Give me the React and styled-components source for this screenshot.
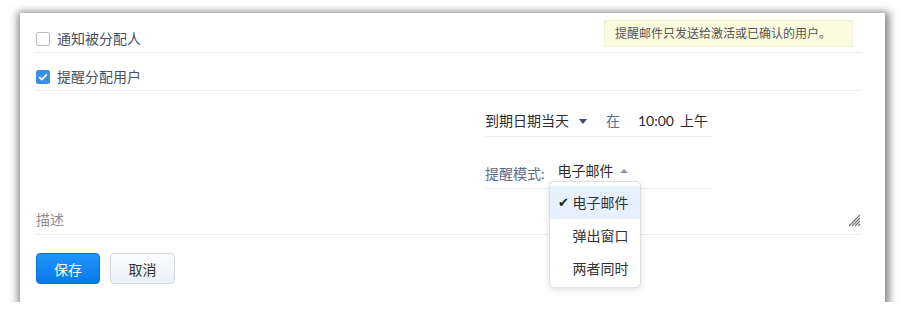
import React, { useState } from 'react'
import styled, { createGlobalStyle } from 'styled-components';

const GlobalStyle = createGlobalStyle`
  html, body {
    margin: 0;
    padding: 0;
    background: #fff;
  }
  body {
    font-family: Lato, "Noto Sans CJK SC", sans-serif;
    font-size: 14px;
    color: #333;
  }
`;

const Panel = styled.div`
  box-sizing: border-box;
  width: 865px;
  height: 289px;
  margin: 13px 0 0 20px;
  padding: 0 23px 0 16px;
  background: #fff;
  box-shadow: 1px 2px 8px 3px rgba(0, 0, 0, 0.5);
`;

const Row = styled.div`
  display: flex;
  justify-content: space-between;
  align-items: flex-start;
  height: ${(p) => p.h}px;
  padding-top: ${(p) => p.pt || 0}px;
  box-sizing: border-box;
  border-bottom: 1px solid #ececec;
`;

const CheckLabel = styled.label`
  display: flex;
  align-items: center;
  gap: 7px;
  margin-top: ${(p) => p.mt}px;
  line-height: 20px;
  color: #4b5160;
  cursor: pointer;
`;

const Box = styled.span`
  box-sizing: border-box;
  width: 14px;
  height: 14px;
  border-radius: 2px;
  display: flex;
  align-items: center;
  justify-content: center;
  border: 1px solid ${(p) => (p.checked ? '#3a8ee6' : '#b9bcc2')};
  background: ${(p) => (p.checked ? '#3a8ee6' : '#fff')};
`;

const Notice = styled.div`
  margin-right: 9px;
  width: 249px;
  height: 27px;
  box-sizing: border-box;
  padding: 0 10px;
  background: #fbfbdf;
  border: 1px solid #f1f1cf;
  font-size: 12px;
  line-height: 25px;
  color: #555;
`;

const Schedule = styled.div`
  margin-left: 449px;
  width: 227px;
`;

const Line = styled.div`
  display: flex;
  align-items: center;
  line-height: 20px;
  height: 20px;
  margin-top: ${(p) => p.mt}px;
  padding: ${(p) => p.pad};
  border-bottom: 1px solid #ececec;
  position: relative;
`;

const Value = styled.span`
  color: #2b2b2b;
  margin-left: ${(p) => p.ml || 0}px;
`;

const Muted = styled.span`
  color: #5c6b8c;
  margin-left: ${(p) => p.ml || 0}px;
`;

const Caret = styled.span`
  margin-left: ${(p) => p.ml}px;
  width: 0;
  height: 0;
  border-left: 4px solid transparent;
  border-right: 4px solid transparent;
  ${(p) =>
    p.up
      ? 'border-bottom: 4px solid #8a90a0;'
      : 'border-top: 5px solid #3d4a63;'}
`;

const Select = styled.span`
  position: relative;
  display: flex;
  align-items: center;
  margin: -7px 0 0 13px;
`;

const Menu = styled.ul`
  position: absolute;
  top: 20px;
  left: -9px;
  width: 92px;
  margin: 0;
  padding: 4px 0 2px;
  list-style: none;
  background: #fff;
  border: 1px solid #dcdfe4;
  border-radius: 5px;
  box-shadow: 0 2px 6px rgba(0, 0, 0, 0.12);
  box-sizing: border-box;
  z-index: 2;
`;

const MenuItem = styled.li`
  position: relative;
  height: 33px;
  line-height: 33px;
  padding-left: 23px;
  color: #333;
  background: ${(p) => (p.active ? '#e6f1fd' : 'transparent')};
`;

const Tick = styled.span`
  position: absolute;
  left: 8px;
  top: 0;
  font-size: 13px;
  color: #222;
`;

const Describe = styled.div`
  position: relative;
  margin-top: 21px;
  padding-bottom: 4px;
  border-bottom: 1px solid #ececec;
`;

const TextArea = styled.textarea`
  display: block;
  width: 100%;
  height: 20px;
  padding: 0;
  border: none;
  outline: none;
  resize: none;
  overflow: hidden;
  font: inherit;
  line-height: 20px;
  color: #333;
  &::placeholder {
    color: #8a8d94;
  }
`;

const Grip = styled.svg`
  position: absolute;
  right: 1px;
  bottom: 7px;
`;

const Actions = styled.div`
  display: flex;
  gap: 10px;
  margin-top: 18px;
`;

const Button = styled.button`
  box-sizing: border-box;
  height: 31px;
  width: ${(p) => p.w}px;
  border-radius: 4px;
  font: inherit;
  font-size: 14px;
  cursor: pointer;
  border: 1px solid ${(p) => (p.primary ? '#0b6fd8' : '#d3d8e0')};
  color: ${(p) => (p.primary ? '#fff' : '#333')};
  background: ${(p) =>
    p.primary
      ? 'linear-gradient(#1f95fb, #0a79e8)'
      : 'linear-gradient(#fcfcfe, #eceff4)'};
`;

const Check = () => (
  <svg width="10" height="8" viewBox="0 0 10 8">
    <path d="M1.2 4.2 L3.8 6.6 L8.8 1.4" fill="none" stroke="#fff" strokeWidth="1.8" />
  </svg>
);

const App = () => {
  const [notify, setNotify] = useState(false);
  const [remind, setRemind] = useState(true);
  const [mode, setMode] = useState('电子邮件');
  const modes = ['电子邮件', '弹出窗口', '两者同时'];

  return (
    <>
      <GlobalStyle />
      <Panel>
        <Row h={40} pt={7}>
          <CheckLabel mt={9} onClick={() => setNotify(!notify)}>
            <Box checked={notify}>{notify && <Check />}</Box>
            通知被分配人
          </CheckLabel>
          <Notice>提醒邮件只发送给激活或已确认的用户。</Notice>
        </Row>
        <Row h={38}>
          <CheckLabel mt={14} onClick={() => setRemind(!remind)}>
            <Box checked={remind}>{remind && <Check />}</Box>
            提醒分配用户
          </CheckLabel>
        </Row>
        <Schedule>
          <Line mt={15} pad="5px 0 5px">
            <Value>到期日期当天</Value>
            <Caret ml={10} />
            <Muted ml={19}>在</Muted>
            <Value ml={18}>10:00</Value>
            <Value ml={6}>上午</Value>
          </Line>
          <Line mt={27} pad="0 0 4px">
            <Muted>提醒模式:</Muted>
            <Select>
              <Value>{mode}</Value>
              <Caret up ml={6} />
              <Menu>
                {modes.map((m) => (
                  <MenuItem key={m} active={m === mode} onClick={() => setMode(m)}>
                    {m === mode && <Tick>✔</Tick>}
                    {m}
                  </MenuItem>
                ))}
              </Menu>
            </Select>
          </Line>
        </Schedule>
        <Describe>
          <TextArea placeholder="描述" />
          <Grip width="13" height="13" viewBox="0 0 13 13">
            <path d="M1 12 L12 1 M4 12 L12 4 M7 12 L12 7 M10 12 L12 10" stroke="#777" strokeWidth="1.2" />
          </Grip>
        </Describe>
        <Actions>
          <Button primary w={64}>保存</Button>
          <Button w={65}>取消</Button>
        </Actions>
      </Panel>
    </>
  );
};

export default App
